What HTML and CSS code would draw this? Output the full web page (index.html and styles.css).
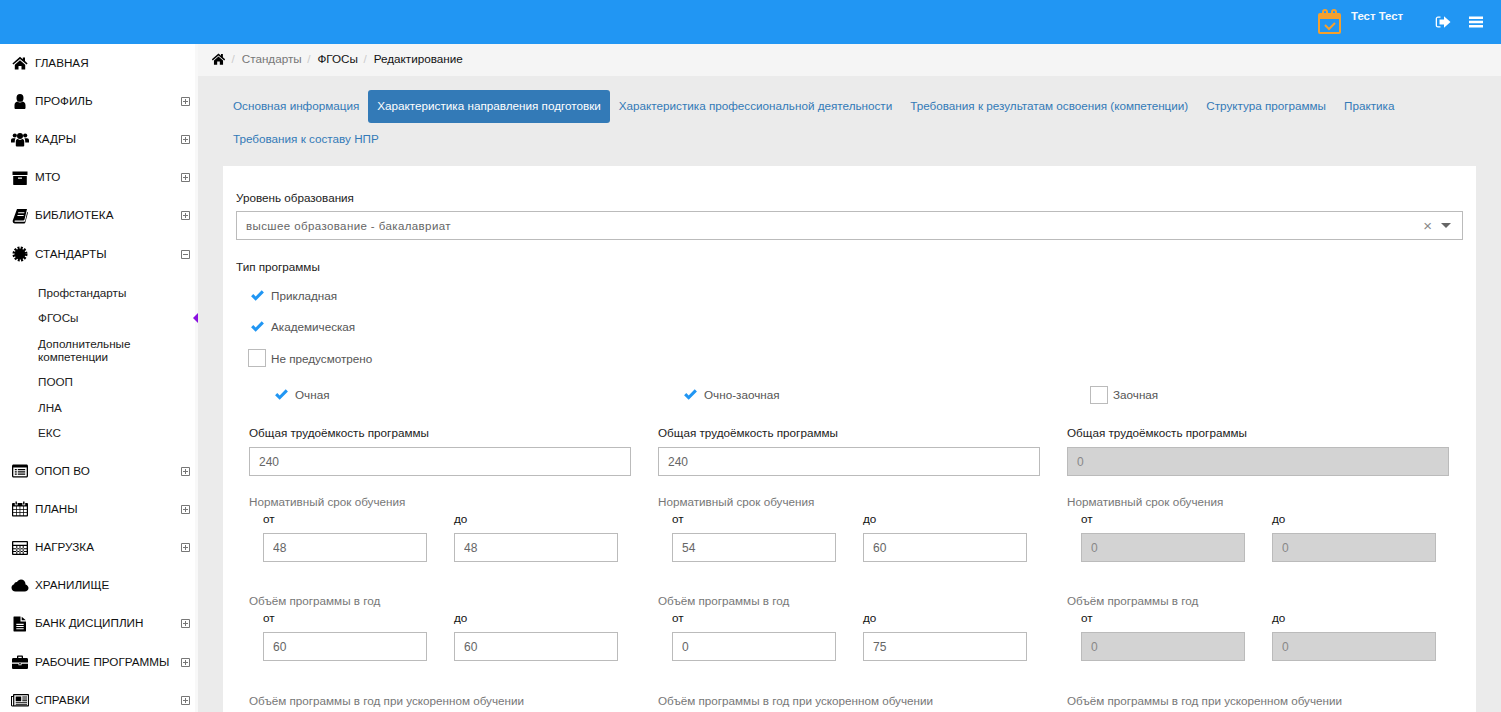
FILE: index.html
```html
<!DOCTYPE html>
<html lang="ru">

<head>
    <meta charset="UTF-8">
    <meta name="viewport" content="width=device-width, initial-scale=1.0">
    <title>Редактирование</title>
    <link rel="stylesheet" href="styles.css">
</head>

<body>
    <svg class="sprite" xmlns="http://www.w3.org/2000/svg">
        <symbol id="i-home" viewBox="0 0 16 16"><path d="M8 1.8.4 8.4l1 1.2L8 3.9l6.6 5.7 1-1.2L13 6.1V2.4h-2.200v1.800zM2.800 9.700 8 5.200l5.200 4.500v4.800H9.500v-3.600h-3v3.600H2.800z"/></symbol>
        <symbol id="i-user" viewBox="0 0 16 16"><path d="M8 1a3.500 3.900 0 1 1 0 7.800A3.500 3.900 0 0 1 8 1zM2.500 15v-2.800c0-2 1.200-3.500 2.900-3.700.7.700 1.600 1.100 2.600 1.100s1.900-.4 2.600-1.100c1.700.2 2.900 1.700 2.900 3.700V15c0 .5-.5 1-1 1h-9c-.5 0-1-.5-1-1z"/></symbol>
        <symbol id="i-users" viewBox="0 0 18 16"><circle cx="3.800" cy="4.500" r="2.100"/><circle cx="14.200" cy="4.500" r="2.100"/><circle cx="9" cy="5" r="3"/><path d="M0 11.500V9.200c0-1 .8-1.900 1.900-1.900h2.700c-.3.500-.6 1.100-.7 1.700l-.2 2.500zM18 11.500V9.200c0-1-.8-1.900-1.900-1.900h-2.700c.3.500.6 1.100.7 1.700l.2 2.500zM4.800 14.700v-4.200c0-1.300.8-2.200 1.800-2.400.6.500 1.500.8 2.400.8s1.800-.3 2.400-.8c1 .2 1.800 1.100 1.800 2.400v4.200c0 .4-.4.8-.9.8H5.700c-.5 0-.9-.4-.9-.8z"/></symbol>
        <symbol id="i-archive" viewBox="0 0 16 16"><path d="M.5 1.500h15V5H.5zM1.200 6h13.600v8.500c0 .3-.2.500-.5.500H1.700c-.3 0-.5-.2-.5-.500zM6 7.500v1.300h4V7.500z" fill-rule="evenodd"/></symbol>
        <symbol id="i-book" viewBox="0 0 16 16"><path d="M5 1h10l-2.500 10.500c-.2.700-.6 1-1.300 1H3.200c-.6 0-.8.400-.7.700.1.400.5.600 1 .6h8.800c.4 0 .6-.2.800-.7L15.200 4l.8.500-2.600 9.800c-.2.800-.8 1.200-1.600 1.200H3c-1.400 0-2.600-1.100-2.300-2.700zM6.300 4.300l-.3 1h6.200l.3-1zM5.600 7l-.3 1h6.200l.3-1z" fill-rule="evenodd"/></symbol>
        <symbol id="i-cert" viewBox="0 0 16 16"><circle cx="8" cy="8" r="5.500"/><circle cx="8" cy="8" r="6.300" fill="none" stroke="#000" stroke-width="2.400" stroke-dasharray="2 1.300"/></symbol>
        <symbol id="i-list" viewBox="0 0 16 16"><path d="M1.500 1.500h13c.8 0 1.500.7 1.500 1.500v10c0 .8-.7 1.500-1.500 1.500h-13C.7 14.500 0 13.800 0 13V3c0-.8.700-1.500 1.500-1.500zM1.300 4.500V13c0 .1.100.2.200.2h13c.1 0 .2-.1.200-.2V4.500zM2.800 6h2v1.200h-2zM5.800 6h7.400v1.200H5.800zM2.800 8.300h2v1.200h-2zM5.800 8.300h7.400v1.200H5.800zM2.800 10.600h2v1.200h-2zM5.800 10.600h7.400v1.200H5.800z" fill-rule="evenodd"/></symbol>
        <symbol id="i-calendar" viewBox="0 0 16 16"><path d="M3.500.5h1.400v3H3.500zM11.100.5h1.400v3h-1.400zM1 2h1.800v2.200h2.800V2h4.800v2.200h2.800V2H15c.5 0 1 .5 1 1v11.500c0 .5-.5 1-1 1H1c-.5 0-1-.5-1-1V3c0-.5.500-1 1-1zM1.200 5.500v8.800h2.900V11.900H1.200v-.7h2.900V9H1.200v-.7h2.900V5.500zM4.800 5.500v2.800h2.800V5.500zM8.300 5.500v2.800h2.900V5.500zM11.900 5.500v2.800h2.900V5.500zM4.800 9v2.200h2.800V9zM8.300 9v2.200h2.900V9zM11.900 9v2.200h2.900V9zM4.800 11.900v2.400h2.800v-2.400zM8.300 11.900v2.400h2.900v-2.400zM11.900 11.900v2.400h2.900v-2.400z" fill-rule="evenodd"/></symbol>
        <symbol id="i-calc" viewBox="0 0 16 16"><path d="M1 1h14c.5 0 1 .5 1 1v12c0 .5-.5 1-1 1H1c-.5 0-1-.5-1-1V2c0-.5.500-1 1-1zM1.300 2.300v2.500h13.400V2.300zM1.300 6v7.700h13.400V6zM4.300 6h1v7.700h-1zM7.500 6h1v7.700h-1zM10.700 6h1v7.700h-1zM1.300 8.300h13.400v1H1.300zM1.300 10.900h13.400v1H1.300z" fill-rule="evenodd"/></symbol>
        <symbol id="i-cloud" viewBox="0 0 17 16"><path d="M4 13.500C1.800 13.500 0 11.900 0 9.800c0-1.700 1.100-3 2.600-3.500C3 4.700 4.200 3.800 5.500 4c.8-1.500 2.300-2.500 4-2.500 2.500 0 4.500 2 4.500 4.500v.4c1.800.5 3 2 3 3.700 0 2.300-1.800 3.400-3.800 3.400z"/></symbol>
        <symbol id="i-file" viewBox="0 0 16 16"><path d="M2 .5h6.500v5h5.500v9.500c0 .3-.2.500-.5.500H2c-.3 0-.5-.2-.5-.500V1c0-.3.200-.5.500-.5zM9.700.7 13.800 4.300H9.700zM4.300 7.800v1.100h7.400V7.800zM4.300 10v1.100h7.400V10zM4.300 12.200v1.100h7.400v-1.100z" fill-rule="evenodd"/></symbol>
        <symbol id="i-case" viewBox="0 0 16 16"><path d="M5 4V2.500C5 2 5.500 1.500 6 1.500h4c.5 0 1 .5 1 1V4h3.700c.7 0 1.300.6 1.300 1.300V8.500H0V5.300C0 4.600.6 4 1.300 4zM6.300 2.800V4h3.400V2.800zM0 9.700h6.500v1.500h3V9.700H16v4c0 .7-.6 1.300-1.300 1.300H1.300C.6 15 0 14.400 0 13.700zM7.300 9h1.400v1.400H7.300z" fill-rule="evenodd"/></symbol>
        <symbol id="i-news" viewBox="0 0 18 16"><path d="M2.800 2h14.400c.4 0 .8.400.8.800v10.700c0 .6-.5 1-1 1H1.200C.5 14.500 0 14 0 13.300V4h2V3c0-.6.300-1 .8-1zM3.300 3.200v9.600c0 .3-.2.500-.4.500h14v-10zM1 5v8.200c0 .1.100.2.200.2s.9 0 .9-.2V5zM4.700 4.500h5.500v4.700H4.700zM11.300 4.500h4.700v1h-4.700zM11.300 6.500h4.700v1h-4.700zM11.300 8.300h4.700v1h-4.700zM4.700 10.200H16v1H4.700zM4.700 12h11.300v.7H4.700z" fill-rule="evenodd"/></symbol>
        <symbol id="i-plus" viewBox="0 0 9 9"><path d="M.5.500h8v8h-8zM2 4.500h5M4.500 2v5" fill="none" stroke="#777" stroke-width="1"/></symbol>
        <symbol id="i-minus" viewBox="0 0 9 9"><path d="M.5.500h8v8h-8zM2 4.500h5" fill="none" stroke="#777" stroke-width="1"/></symbol>
        <symbol id="i-check" viewBox="0 0 14 12"><path d="M5 11.800 0 6.800l2.400-2.400L5 7 11.600.4 14 2.800z"/></symbol>
    </svg>

    <div class="page">
        <header class="topbar">
            <svg class="tb-logo" viewBox="0 0 24 26" fill="none" stroke="#f5a02c" stroke-width="2">
                <rect x="1" y="5" width="21" height="19" rx="1"/>
                <path d="M1 8h21" stroke-width="4"/>
                <path d="M5 6V3a2 2 0 0 1 4 0v3M14 6V3a2 2 0 0 1 4 0v3"/>
                <path d="M7 16l4 4 6-6"/>
            </svg>
            <span class="tb-user">Тест Тест</span>
            <svg class="tb-exit" viewBox="0 0 16 14" fill="#fff">
                <path d="M5.500 1.500H3C1.700 1.500 .7 2.500 .7 3.800v6.400c0 1.300 1 2.300 2.300 2.300h2.500v-1.300H3c-.6 0-1-.4-1-1V3.800c0-.6.400-1 1-1h2.500z"/>
                <path d="M9 1.300 15.500 7 9 12.700V9.500H4.500v-5H9z"/>
            </svg>
            <svg class="tb-bars" viewBox="0 0 14 12" fill="#fff">
                <path d="M0 .5h14v2.400H0zM0 4.800h14v2.400H0zM0 9.100h14v2.400H0z"/>
            </svg>
        </header>

        <div class="layout">
            <nav class="sidebar">
                <div class="menu-item"><svg class="mi-icon"><use href="#i-home"/></svg><span class="mi-text">Главная</span></div>
                <div class="menu-item"><svg class="mi-icon"><use href="#i-user"/></svg><span class="mi-text">Профиль</span><svg class="mi-toggle"><use href="#i-plus"/></svg></div>
                <div class="menu-item"><svg class="mi-icon"><use href="#i-users"/></svg><span class="mi-text">Кадры</span><svg class="mi-toggle"><use href="#i-plus"/></svg></div>
                <div class="menu-item"><svg class="mi-icon"><use href="#i-archive"/></svg><span class="mi-text">МТО</span><svg class="mi-toggle"><use href="#i-plus"/></svg></div>
                <div class="menu-item"><svg class="mi-icon"><use href="#i-book"/></svg><span class="mi-text">Библиотека</span><svg class="mi-toggle"><use href="#i-plus"/></svg></div>
                <div class="menu-item"><svg class="mi-icon"><use href="#i-cert"/></svg><span class="mi-text">Стандарты</span><svg class="mi-toggle"><use href="#i-minus"/></svg></div>
                <div class="submenu">
                    <div class="sub-item">Профстандарты</div>
                    <div class="sub-item sub-active">ФГОСы</div>
                    <div class="sub-item sub-double">Дополнительные компетенции</div>
                    <div class="sub-item">ПООП</div>
                    <div class="sub-item">ЛНА</div>
                    <div class="sub-item">ЕКС</div>
                </div>
                <div class="menu-item"><svg class="mi-icon"><use href="#i-list"/></svg><span class="mi-text">ОПОП ВО</span><svg class="mi-toggle"><use href="#i-plus"/></svg></div>
                <div class="menu-item"><svg class="mi-icon"><use href="#i-calendar"/></svg><span class="mi-text">Планы</span><svg class="mi-toggle"><use href="#i-plus"/></svg></div>
                <div class="menu-item"><svg class="mi-icon"><use href="#i-calc"/></svg><span class="mi-text">Нагрузка</span><svg class="mi-toggle"><use href="#i-plus"/></svg></div>
                <div class="menu-item"><svg class="mi-icon"><use href="#i-cloud"/></svg><span class="mi-text">Хранилище</span></div>
                <div class="menu-item"><svg class="mi-icon"><use href="#i-file"/></svg><span class="mi-text">Банк дисциплин</span><svg class="mi-toggle"><use href="#i-plus"/></svg></div>
                <div class="menu-item"><svg class="mi-icon"><use href="#i-case"/></svg><span class="mi-text">Рабочие программы</span><svg class="mi-toggle"><use href="#i-plus"/></svg></div>
                <div class="menu-item"><svg class="mi-icon"><use href="#i-news"/></svg><span class="mi-text">Справки</span><svg class="mi-toggle"><use href="#i-plus"/></svg></div>
            </nav>

            <main class="content">
                <div class="crumbs">
                    <svg class="crumb-home"><use href="#i-home"/></svg>
                    <span class="crumb-sep">/</span>
                    <span class="crumb-muted">Стандарты</span>
                    <span class="crumb-sep">/</span>
                    <span>ФГОСы</span>
                    <span class="crumb-sep">/</span>
                    <span>Редактирование</span>
                </div>

                <div class="main-area">
                    <div class="tabs">
                        <a class="tab">Основная информация</a>
                        <a class="tab tab-active">Характеристика направления подготовки</a>
                        <a class="tab">Характеристика профессиональной деятельности</a>
                        <a class="tab">Требования к результатам освоения (компетенции)</a>
                        <a class="tab">Структура программы</a>
                        <a class="tab">Практика</a>
                        <a class="tab">Требования к составу НПР</a>
                    </div>

                    <div class="card">
                        <div class="field-label">Уровень образования</div>
                        <div class="select">
                            <span class="select-value">высшее образование - бакалавриат</span>
                            <span class="select-clear">×</span>
                            <span class="select-caret"></span>
                        </div>

                        <div class="field-label type-label">Тип программы</div>
                        <div class="options">
                            <div class="option"><span class="opt-mark"><svg class="opt-check"><use href="#i-check"/></svg></span>Прикладная</div>
                            <div class="option"><span class="opt-mark"><svg class="opt-check"><use href="#i-check"/></svg></span>Академическая</div>
                            <div class="option"><span class="opt-mark"><span class="opt-box"></span></span>Не предусмотрено</div>
                        </div>

                        <div class="forms">
                            <div class="form-col">
                                <div class="option form-option"><span class="opt-mark"><svg class="opt-check"><use href="#i-check"/></svg></span>Очная</div>
                                <div class="group">
                                    <div class="field-label">Общая трудоёмкость программы</div>
                                    <input class="input" value="240">
                                </div>
                                <div class="group">
                                    <div class="group-title">Нормативный срок обучения</div>
                                    <div class="range">
                                        <div><div class="range-label">от</div><input class="input" value="48"></div>
                                        <div><div class="range-label">до</div><input class="input" value="48"></div>
                                    </div>
                                </div>
                                <div class="group">
                                    <div class="group-title">Объём программы в год</div>
                                    <div class="range">
                                        <div><div class="range-label">от</div><input class="input" value="60"></div>
                                        <div><div class="range-label">до</div><input class="input" value="60"></div>
                                    </div>
                                </div>
                                <div class="group-title">Объём программы в год при ускоренном обучении</div>
                            </div>

                            <div class="form-col">
                                <div class="option form-option"><span class="opt-mark"><svg class="opt-check"><use href="#i-check"/></svg></span>Очно-заочная</div>
                                <div class="group">
                                    <div class="field-label">Общая трудоёмкость программы</div>
                                    <input class="input" value="240">
                                </div>
                                <div class="group">
                                    <div class="group-title">Нормативный срок обучения</div>
                                    <div class="range">
                                        <div><div class="range-label">от</div><input class="input" value="54"></div>
                                        <div><div class="range-label">до</div><input class="input" value="60"></div>
                                    </div>
                                </div>
                                <div class="group">
                                    <div class="group-title">Объём программы в год</div>
                                    <div class="range">
                                        <div><div class="range-label">от</div><input class="input" value="0"></div>
                                        <div><div class="range-label">до</div><input class="input" value="75"></div>
                                    </div>
                                </div>
                                <div class="group-title">Объём программы в год при ускоренном обучении</div>
                            </div>

                            <div class="form-col">
                                <div class="option form-option"><span class="opt-mark"><span class="opt-box"></span></span>Заочная</div>
                                <div class="group">
                                    <div class="field-label">Общая трудоёмкость программы</div>
                                    <input class="input" value="0" disabled>
                                </div>
                                <div class="group">
                                    <div class="group-title">Нормативный срок обучения</div>
                                    <div class="range">
                                        <div><div class="range-label">от</div><input class="input" value="0" disabled></div>
                                        <div><div class="range-label">до</div><input class="input" value="0" disabled></div>
                                    </div>
                                </div>
                                <div class="group">
                                    <div class="group-title">Объём программы в год</div>
                                    <div class="range">
                                        <div><div class="range-label">от</div><input class="input" value="0" disabled></div>
                                        <div><div class="range-label">до</div><input class="input" value="0" disabled></div>
                                    </div>
                                </div>
                                <div class="group-title">Объём программы в год при ускоренном обучении</div>
                            </div>
                        </div>
                    </div>
                </div>
            </main>
        </div>
    </div>
</body>

</html>
```

FILE: styles.css
```css
* {
    margin: 0;
    padding: 0;
    box-sizing: border-box;
    font-family: "Liberation Sans", Arial, sans-serif;
}

body {
    font-size: 11.7px;
    color: #222;
    background: #ebebeb;
    overflow: hidden;
}

.sprite {
    display: none;
}

.page {
    display: flex;
    flex-direction: column;
    height: 100vh;
    overflow: hidden;
}

/* top bar */
.topbar {
    display: flex;
    align-items: center;
    flex: 0 0 44px;
    height: 44px;
    padding-right: 18px;
    justify-content: flex-end;
    background: #2196f3;
}

.tb-logo {
    width: 24px;
    height: 26px;
    margin-right: 9px;
}

.tb-user {
    width: 84px;
    margin-bottom: 12px;
    color: #fff;
    font-weight: bold;
    font-size: 11.4px;
    opacity: .95;
}

.tb-exit {
    width: 16px;
    height: 14px;
    margin-right: 18px;
}

.tb-bars {
    width: 14px;
    height: 12px;
}

/* side menu */
.layout {
    display: flex;
    flex: 1;
    min-height: 0;
}

.sidebar {
    flex: 0 0 198px;
    width: 198px;
    background: #fff;
    box-shadow: inset -3px 0 0 #f8f8f8;
    overflow: hidden;
}

.menu-item {
    display: flex;
    align-items: center;
    height: 38.2px;
    padding-left: 11px;
    color: #111;
    text-transform: uppercase;
}

.mi-icon {
    width: 18px;
    height: 16px;
    margin-right: 6px;
    flex: none;
}

.mi-text {
    flex: 1;
    margin-bottom: 2px;
    white-space: nowrap;
}

.mi-toggle {
    width: 9px;
    height: 9px;
    margin-right: 8px;
    flex: none;
}

.submenu {
    padding: 6.6px 0 6.4px 38px;
}

.sub-item {
    position: relative;
    display: flex;
    align-items: center;
    height: 25.5px;
    color: #222;
    line-height: 13px;
}

.sub-double {
    height: 38.5px;
    width: 110px;
}

.sub-active::after {
    content: "";
    position: absolute;
    left: 155px;
    top: 8px;
    border: 5px solid transparent;
    border-left-width: 0;
    border-right-color: #8a10e0;
}

/* breadcrumbs */
.content {
    flex: 1;
    min-width: 0;
    display: flex;
    flex-direction: column;
}

.crumbs {
    display: flex;
    align-items: center;
    flex: 0 0 32px;
    padding-left: 13px;
    padding-bottom: 2px;
    background: #f5f5f5;
    color: #111;
}

.crumbs span {
    margin-bottom: 2px;
}

.crumb-home {
    width: 15px;
    height: 14px;
}

.crumbs .crumb-sep {
    margin: 0 7px 2px 5.5px;
    color: #ccc;
}

.crumb-muted {
    color: #777;
}

/* tabs */
.main-area {
    flex: 1;
    padding: 14px 25px 0;
    overflow: hidden;
}

.tabs {
    display: flex;
    flex-wrap: wrap;
    padding-left: 1px;
    margin-bottom: 10px;
}

.tab {
    height: 33px;
    padding: 0 9px;
    line-height: 31px;
    color: #337ab7;
    border-radius: 3px;
}

.tab-active {
    color: #fff;
    background: #337ab7;
}

/* form card */
.card {
    padding: 25px 13px 40px;
    background: #fff;
}

.field-label {
    height: 14px;
    line-height: 14px;
    color: #222;
}

.select {
    display: flex;
    align-items: center;
    height: 29px;
    margin-top: 6px;
    padding: 0 11px 0 9px;
    border: 1px solid #bbb;
}

.select-value {
    flex: 1;
    color: #666;
    font-size: 11.5px;
    letter-spacing: .4px;
}

.select-clear {
    margin-right: 9px;
    color: #888;
    font-size: 15px;
}

.select-caret {
    border: 5px solid transparent;
    border-top-color: #666;
    border-bottom-width: 0;
}

.type-label {
    margin-top: 20px;
}

.options {
    margin-top: 5.6px;
    padding-left: 12px;
}

.option {
    display: flex;
    align-items: center;
    height: 31.5px;
    color: #555;
}

.opt-mark {
    display: flex;
    align-items: center;
    justify-content: center;
    width: 18px;
    margin-right: 5px;
}

.opt-check {
    width: 13px;
    height: 11px;
    fill: #2196f3;
}

.opt-box {
    width: 18px;
    height: 18px;
    border: 1px solid #bbb;
}

.forms {
    display: grid;
    grid-template-columns: repeat(3, 383px);
    gap: 26px;
    padding: 5px 13px 0;
}

.form-option {
    padding-left: 23px;
    margin-bottom: 15.45px;
}

.group {
    margin-bottom: 19px;
}

.group:nth-child(3) {
    margin-bottom: 32px;
}

.group:nth-child(4) {
    margin-bottom: 33px;
}

.group > .input {
    margin-top: 7px;
    width: 382px;
}

.group-title {
    height: 14px;
    line-height: 14px;
    color: #777;
}

.range {
    display: grid;
    grid-template-columns: 164px 164px;
    gap: 27px;
    padding-left: 14px;
    margin-top: 3px;
}

.range-label {
    height: 14px;
    line-height: 14px;
    margin-bottom: 7px;
    color: #111;
}

.input {
    display: block;
    width: 100%;
    height: 29px;
    padding: 0 9px;
    border: 1px solid #bbb;
    border-radius: 0;
    outline: none;
    color: #666;
    font-size: 12px;
    background: #fff;
}

.input:disabled {
    color: #888;
    background: #d3d3d3;
}
```
